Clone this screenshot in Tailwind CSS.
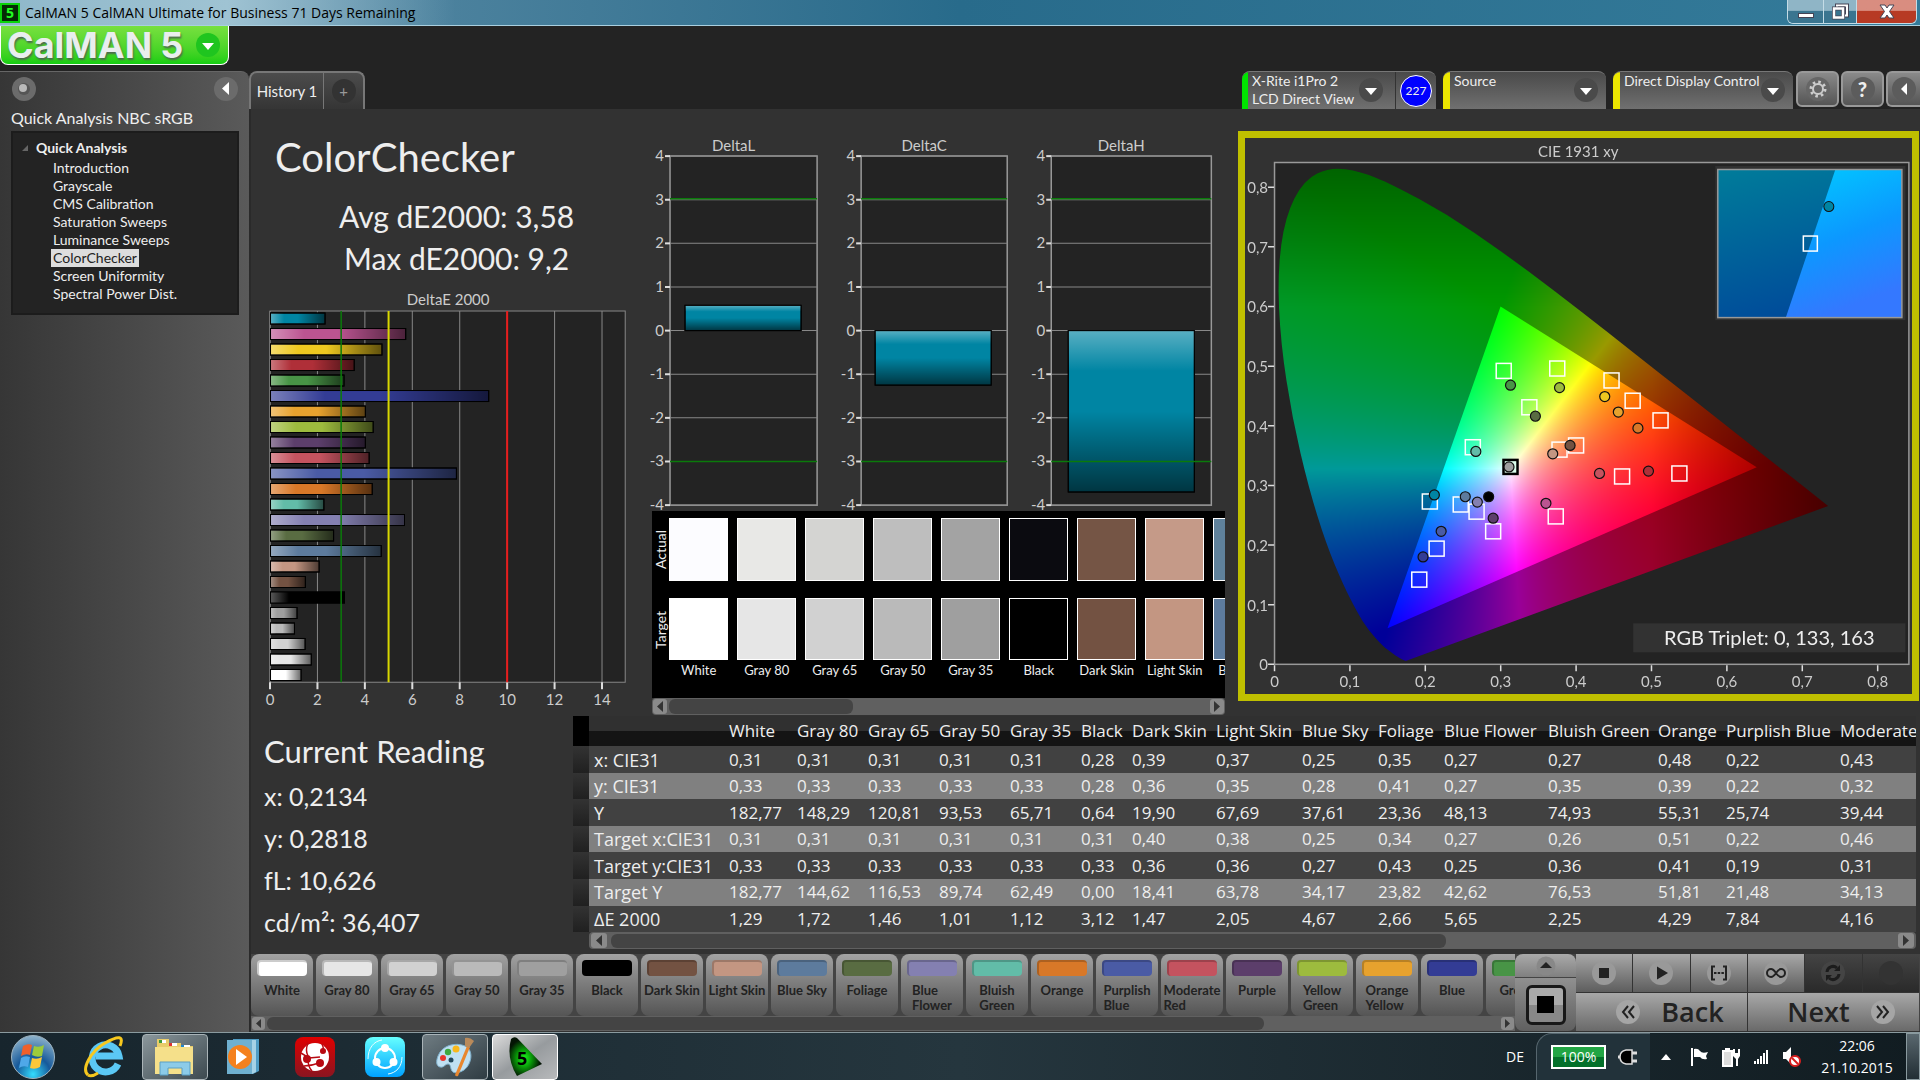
<!DOCTYPE html>
<html lang="en">
<head>
  <meta charset="UTF-8">
  <title>CalMAN 5</title>
  <script src="https://cdn.jsdelivr.net/npm/@tailwindcss/browser@4"></script>
</head>
<body class="h-screen overflow-hidden flex flex-col bg-[#232323] text-[#eee] font-['Lato','Noto_Sans',sans-serif] text-[15px]">

  <!-- window title -->
  <div class="h-[26px] shrink-0 flex items-start justify-between border-b border-[#a9cfdf] bg-linear-to-r from-[#6795ad] via-[#286b8b] to-[#347b9a] text-black">
    <div class="flex items-center h-full gap-[5px] pr-10 bg-linear-to-r from-[#8fb8ca] via-[#9fc3d3] to-transparent font-['Open_Sans',sans-serif] text-sm">
      <span class="w-5 h-5 bg-[#052c05] border-2 border-[#0bd40b] text-[#2f2] font-bold leading-4 text-center">5</span>
      <span>CalMAN 5 CalMAN Ultimate for Business 71 Days Remaining</span>
    </div>
    <div class="flex h-6 mr-[3px] border border-t-0 border-[#c4dce6] rounded-b-md overflow-hidden">
      <button aria-label="Minimize" class="w-9 flex justify-center items-end pb-[5px] bg-linear-to-b from-[#8fb5c6] from-45% to-[#3a7590] to-50% border-r border-[#c4dce6]"><span class="w-4 h-[5px] bg-white border border-[#445]"></span></button>
      <button aria-label="Restore" class="w-[33px] flex justify-center items-center bg-linear-to-b from-[#8fb5c6] from-45% to-[#3a7590] to-50% border-r border-[#c4dce6]">
        <svg width="18" height="17" viewBox="0 0 18 17" fill="none"><path d="M6 2.5h10v10H6z" stroke="#445" stroke-width="4"/><path d="M6 2.5h10v10H6z" stroke="#fff" stroke-width="2"/><path d="M3 5.500h9v9H3z" fill="#3a7590" stroke="#445" stroke-width="4"/><path d="M3 5.500h9v9H3z" stroke="#fff" stroke-width="2.500"/></svg>
      </button>
      <button aria-label="Close" class="w-[59px] flex justify-center items-center bg-linear-to-b from-[#d98d80] from-45% to-[#b73a24] to-50%">
        <svg width="16" height="15" viewBox="0 0 16 15"><path d="M1 1h5l2 3 2-3h5l-4.500 6.500L15 14h-5l-2-3-2 3H1l4.500-6.500z" fill="#fff" stroke="#445"/></svg>
      </button>
    </div>
  </div>

  <header class="h-[45px] shrink-0">
    <button class="h-[39px] w-[229px] flex items-center gap-2 pl-[6px] rounded-b-lg border border-t-0 border-white bg-linear-to-b from-[#77e03f] to-[#12ce12]">
      <span class="w-[180px] shrink-0 whitespace-nowrap text-left font-['Inter',sans-serif] font-bold text-[36px] leading-8 text-[#e9eeee] [text-shadow:1px_2px_2px_#4c6b4c]">CalMAN<span class="ml-2">5</span></span>
      <svg class="shrink-0" width="26" height="26" viewBox="0 0 26 26"><circle cx="13" cy="13" r="12" fill="#1fc51f"/><path d="M7 11h12l-6 7z" fill="#fff"/></svg>
    </button>
  </header>

  <div class="flex-1 min-h-0 flex">
    <!-- workflow tree -->
    <aside class="w-[249px] shrink-0 pt-1 pl-[11px] pr-[10px] rounded-tr-lg border-t border-[#666] bg-linear-to-r from-[#363636] to-[#5a5a5a]">
      <div class="flex justify-between">
        <button aria-label="Record"><svg width="26" height="26" viewBox="0 0 26 26"><circle cx="13" cy="13" r="12" fill="#6b6b6b"/><circle cx="13" cy="13" r="6" fill="#555"/><circle cx="12" cy="12" r="4" fill="#b9b9b9"/></svg></button>
        <button aria-label="Collapse"><svg width="26" height="26" viewBox="0 0 26 26"><circle cx="13" cy="13" r="12" fill="#6b6b6b"/><path d="M16 6v13l-7-6.500z" fill="#fff"/></svg></button>
      </div>
      <h2 class="mt-1 leading-6 text-base whitespace-nowrap">Quick Analysis NBC sRGB</h2>
      <nav class="mt-px h-[184px] pt-[6px] border-2 border-[#1c1c1c] bg-[#232323] text-sm leading-[18px] whitespace-nowrap">
        <div class="flex items-center gap-[7px] pl-[9px] mb-[2px] font-bold"><svg width="7" height="7" viewBox="0 0 7 7"><path d="M6 0v6H0z" fill="#666"/></svg>Quick Analysis</div>
        <ul id="tree" class="pl-[38px]"></ul>
      </nav>
    </aside>

    <div class="flex-1 min-w-0 flex flex-col">
      <!-- tabs -->
      <div class="h-[38px] shrink-0 flex justify-between">
        <div class="flex w-[116px] border-2 border-b-0 border-[#777] rounded-t-lg bg-linear-to-b from-[#4c4c4c] to-[#353535]">
          <button class="w-[73px] border-r border-[#777] text-[15px] whitespace-nowrap">History 1</button>
          <button aria-label="Add" class="flex-1 flex justify-center items-center"><span class="w-6 h-6 rounded-full bg-[#333] text-[#999] leading-6">+</span></button>
        </div>
        <div class="flex gap-[7px] text-sm leading-[18px] whitespace-nowrap">
          <div class="w-[194px] flex rounded-t-lg overflow-hidden border-t border-[#777] bg-linear-to-b from-[#4a4a4a] to-[#707070]">
            <div class="w-[6px] bg-[#00e400]"></div>
            <button class="flex-1 flex justify-between pl-1 pr-[11px] text-left border-r border-[#333]"><span>X-Rite i1Pro 2<br>LCD Direct View</span><svg class="mt-[5px] -ml-2" width="26" height="26" viewBox="0 0 26 26"><circle cx="13" cy="13" r="12" fill="#4a4a4a"/><path d="M7 11h12l-6 7z" fill="#fff"/></svg></button>
            <div class="w-10 flex items-center justify-center"><span class="w-8 h-8 rounded-full bg-[#00f] border border-white text-center text-xs leading-[30px]">227</span></div>
          </div>
          <button class="w-[163px] flex text-left rounded-t-lg overflow-hidden border-t border-[#777] bg-linear-to-b from-[#4a4a4a] to-[#707070]">
            <span class="w-[7px] h-full bg-[#ebe600]"></span><span class="flex-1 pl-1">Source</span><svg class="mt-[5px] mr-[7px]" width="26" height="26" viewBox="0 0 26 26"><circle cx="13" cy="13" r="12" fill="#4a4a4a"/><path d="M7 11h12l-6 7z" fill="#fff"/></svg>
          </button>
          <button class="w-[180px] flex text-left rounded-t-lg overflow-hidden border-t border-[#777] bg-linear-to-b from-[#4a4a4a] to-[#707070]">
            <span class="w-[7px] h-full bg-[#ebe600]"></span><span class="flex-1 pl-1">Direct Display Control</span><svg class="mt-[5px] mr-[7px]" width="26" height="26" viewBox="0 0 26 26"><circle cx="13" cy="13" r="12" fill="#4a4a4a"/><path d="M7 11h12l-6 7z" fill="#fff"/></svg>
          </button>
          <div class="flex gap-[2px] -ml-1 h-9">
            <button aria-label="Settings" class="w-[43px] flex justify-center items-center rounded-md border-2 border-[#999] bg-linear-to-b from-[#8a8a8a] to-[#555]"><svg width="26" height="26" viewBox="0 0 26 26" fill="none"><circle cx="13" cy="13" r="12" fill="#666"/><circle cx="13" cy="13" r="5" stroke="#ccc" stroke-width="2"/><circle cx="13" cy="13" r="7" stroke="#ccc" stroke-width="3" stroke-dasharray="2.500 3"/></svg></button>
            <button aria-label="Help" class="w-[43px] flex justify-center items-center rounded-md border-2 border-[#999] bg-linear-to-b from-[#8a8a8a] to-[#555]"><span class="w-6 h-6 rounded-full bg-[#5c5c5c] text-xl leading-6 font-black">?</span></button>
            <button aria-label="Hide" class="w-[34px] flex justify-center items-center rounded-l-md border-2 border-r-0 border-[#999] bg-linear-to-b from-[#8a8a8a] to-[#555]"><svg width="26" height="26" viewBox="0 0 26 26"><circle cx="13" cy="13" r="12" fill="#5c5c5c"/><path d="M16 7v12l-6-6z" fill="#fff"/></svg></button>
          </div>
        </div>
      </div>

      <main class="flex-1 min-h-0 flex flex-col border-l-2 border-[#2a2a2a] bg-[#323232]">
        <div class="grid grid-cols-[393fr_580fr_695fr]">
          <!-- dE2000 summary -->
          <section class="min-w-0">
            <h1 class="pt-[22px] pl-[24px] text-[40px] leading-[52px]">ColorChecker</h1>
            <p class="mt-3 pl-[18px] text-center text-[30px] leading-[42px]">Avg dE2000: 3,58<br>Max dE2000: 9,2</p>
            <svg id="deltaE" class="mt-[10px] w-full h-auto" viewBox="252 289 393 421" font-size="15" fill="#ccc"></svg>
          </section>

          <!-- delta L / C / H and patches -->
          <section class="min-w-0 pt-[22px]">
            <svg id="deltaLCH" class="w-full h-auto overflow-visible" viewBox="645 131 580 380" font-size="15" fill="#ccc"></svg>
            <div class="ml-2">
              <div class="flex h-[187px] pt-[7px] bg-black overflow-hidden">
                <div class="w-[17px] shrink-0 flex flex-col gap-[17px] text-sm leading-[17px]">
                  <span class="h-[63px] text-center [writing-mode:vertical-rl] rotate-180">Actual</span>
                  <span class="h-[63px] text-center [writing-mode:vertical-rl] rotate-180">Target</span>
                </div>
                <div id="patches" class="flex gap-[9px] text-[13px] leading-5"></div>
              </div>
              <div class="h-[17px] flex items-center justify-between bg-[#606060] rounded-sm px-px">
                <svg width="14" height="15" viewBox="0 0 14 15"><rect width="14" height="15" rx="3" fill="#8a8a8a"/><path d="M10 2v11L4 7.500z" fill="#333"/></svg>
                <span class="ml-[2px] mr-auto w-[184px] h-[15px] rounded-md bg-[#444]"></span>
                <svg width="14" height="15" viewBox="0 0 14 15"><rect width="14" height="15" rx="3" fill="#8a8a8a"/><path d="M4 2v11l6-5.500z" fill="#333"/></svg>
              </div>
            </div>
          </section>

          <!-- chromaticity diagram -->
          <section class="min-w-0 pt-[22px] pl-[13px] pr-px">
            <div class="relative border-[7px] border-[#bfbf00]">
              <svg class="block w-full h-auto" viewBox="1245 138 667 556"><rect x="1274" y="162" width="635" height="502" fill="#232323"/></svg>
              <canvas id="gamut" width="667" height="556" class="absolute inset-0 w-full h-full"></canvas>
              <svg id="cie" class="absolute inset-0 w-full h-full" viewBox="1245 138 667 556" font-size="15" fill="#ccc"></svg>
            </div>
          </section>
        </div>

        <div class="flex mt-px">
          <section class="w-[322px] shrink-0 pl-[13px] pt-[14px] text-[25px] leading-[42px] whitespace-nowrap">
            <h2 class="text-[31px] leading-[42px] mb-[3px]">Current Reading</h2>
            <p>x: 0,2134</p>
            <p>y: 0,2818</p>
            <p>fL: 10,626</p>
            <p>cd/m²: 36,407</p>
          </section>
          <section class="flex-1 min-w-0 mr-1">
            <div class="overflow-hidden">
              <table class="table-fixed w-[1384px] h-[216px] font-['Open_Sans',sans-serif] text-[17px] leading-6 whitespace-nowrap text-left">
                <colgroup>
                  <col class="w-[16px]"><col class="w-[135px]"><col class="w-[68px]"><col class="w-[71px]"><col class="w-[71px]"><col class="w-[71px]"><col class="w-[71px]"><col class="w-[51px]"><col class="w-[84px]"><col class="w-[86px]"><col class="w-[76px]"><col class="w-[66px]"><col class="w-[104px]"><col class="w-[110px]"><col class="w-[68px]"><col class="w-[114px]"><col class="w-[122px]">
                </colgroup>
                <thead><tr id="readingsHead" class="h-[30px] bg-linear-to-b from-[#303030] from-50% to-[#141414] to-50%"></tr></thead>
                <tbody id="readings"></tbody>
              </table>
            </div>
            <div class="ml-4 h-[17px] flex items-center bg-[#606060] rounded-sm px-[2px]">
              <svg width="16" height="15" viewBox="0 0 16 15"><rect width="16" height="15" rx="3" fill="#8a8a8a"/><path d="M11 2v11L5 7.500z" fill="#333"/></svg>
              <span class="ml-1 mr-auto w-[835px] h-[14px] rounded-md bg-[#444]"></span>
              <svg width="16" height="15" viewBox="0 0 16 15"><rect width="16" height="15" rx="3" fill="#8a8a8a"/><path d="M5 2v11l6-5.500z" fill="#333"/></svg>
            </div>
          </section>
        </div>

        <!-- pattern buttons and transport -->
        <div class="mt-auto mb-px h-[77px] shrink-0 flex bg-[#444]">
          <div class="flex-1 min-w-0 flex flex-col">
            <div id="patterns" class="flex gap-[3px] h-[62px] overflow-hidden text-[13px] leading-[15px] font-bold text-[#222]"></div>
            <div class="h-[15px] flex items-center bg-[#606060] px-px">
              <svg width="13" height="13" viewBox="0 0 13 13"><rect width="13" height="13" rx="3" fill="#8a8a8a"/><path d="M9 2v9L4 6.500z" fill="#333"/></svg>
              <span class="ml-[2px] mr-auto w-[997px] h-[13px] rounded-md bg-[#444]"></span>
              <svg width="13" height="13" viewBox="0 0 13 13"><rect width="13" height="13" rx="3" fill="#8a8a8a"/><path d="M4 2v9l5-4.500z" fill="#333"/></svg>
            </div>
          </div>
          <div class="w-[61px] flex flex-col gap-px bg-[#444]">
            <button aria-label="Up" class="h-[23px] flex justify-center items-center rounded-t-lg bg-linear-to-b from-[#aaa] to-[#808080]"><svg width="20" height="20" viewBox="0 0 20 20"><circle cx="10" cy="10" r="9.500" fill="#888"/><path d="M4 12h12l-6-6z" fill="#222"/></svg></button>
            <button aria-label="Window pattern" class="flex-1 flex justify-center items-center rounded-b-lg bg-linear-to-b from-[#909090] to-[#606060]"><span class="w-10 h-10 rounded-md border-3 border-[#181818] flex justify-center items-center bg-linear-to-b from-[#aaa] from-50% to-[#888] to-50%"><span class="w-[17px] h-[17px] bg-black"></span></span></button>
          </div>
          <div class="w-[343px] mr-px grid grid-cols-6 grid-rows-2 gap-px bg-[#333] text-[#222]">
            <button aria-label="Stop" class="flex justify-center items-center bg-linear-to-b from-[#a8a8a8] to-[#5e5e5e]"><svg width="26" height="26" viewBox="0 0 26 26"><circle cx="13" cy="13" r="12" fill="#999"/><path d="M8 8h10v10H8z" fill="#222"/></svg></button>
            <button aria-label="Play" class="flex justify-center items-center bg-linear-to-b from-[#a8a8a8] to-[#5e5e5e]"><svg width="26" height="26" viewBox="0 0 26 26"><circle cx="13" cy="13" r="12" fill="#999"/><path d="M9 6.500v13l11-6.500z" fill="#222"/></svg></button>
            <button aria-label="Series" class="flex justify-center items-center bg-linear-to-b from-[#a8a8a8] to-[#5e5e5e]"><svg width="26" height="26" viewBox="0 0 26 26" fill="none" stroke="#222" stroke-width="2"><circle cx="13" cy="13" r="12" fill="#999" stroke="none"/><path d="M9 6.500H6v13h3M17 6.500h3v13h-3"/><path d="M8 13h10" stroke-dasharray="2.500 1.200"/></svg></button>
            <button aria-label="Continuous" class="flex justify-center items-center bg-linear-to-b from-[#a8a8a8] to-[#5e5e5e]"><svg width="26" height="26" viewBox="0 0 26 26" fill="none" stroke="#222" stroke-width="2"><circle cx="13" cy="13" r="12" fill="#999" stroke="none"/><path d="M13 13c-2-3-3.500-4-5-4a4 4 0 0 0 0 8c1.500 0 3-1 5-4s3.500-4 5-4a4 4 0 0 1 0 8c-1.500 0-3-1-5-4z"/></svg></button>
            <button aria-label="Refresh" class="flex justify-center items-center bg-linear-to-b from-[#444] to-[#2a2a2a]"><svg width="26" height="26" viewBox="0 0 26 26" fill="none" stroke="#1c1c1c" stroke-width="3"><circle cx="13" cy="13" r="12" fill="#444" stroke="none"/><path d="M7 12a6 6 0 0 1 10-4M19 14a6 6 0 0 1-10 4"/><path d="M20 5v6h-6zM6 21v-6h6z" fill="#1c1c1c" stroke="none"/></svg></button>
            <button aria-label="None" class="flex justify-center items-center bg-linear-to-b from-[#444] to-[#2a2a2a]"><svg width="26" height="26" viewBox="0 0 26 26"><circle cx="13" cy="13" r="12" fill="#333"/></svg></button>
            <button class="col-span-3 flex justify-center items-center gap-5 pl-4 bg-linear-to-b from-[#a8a8a8] to-[#6a6a6a] font-['Open_Sans',sans-serif] font-semibold text-[27px] leading-8"><svg width="26" height="26" viewBox="0 0 26 26" fill="none" stroke="#222" stroke-width="2"><circle cx="13" cy="13" r="12" fill="#a5a5a5" stroke="none"/><path d="M13 7l-5 6 5 6M19 7l-5 6 5 6"/></svg>Back</button>
            <button class="col-span-3 flex justify-center items-center gap-5 pl-4 bg-linear-to-b from-[#a8a8a8] to-[#6a6a6a] font-['Open_Sans',sans-serif] font-semibold text-[27px] leading-8">Next<svg width="26" height="26" viewBox="0 0 26 26" fill="none" stroke="#222" stroke-width="2"><circle cx="13" cy="13" r="12" fill="#a5a5a5" stroke="none"/><path d="M7 7l5 6-5 6M13 7l5 6-5 6"/></svg></button>
          </div>
        </div>
      </main>
    </div>
  </div>

  <!-- taskbar -->
  <footer class="h-12 shrink-0 flex items-center justify-between border-t border-[#8a9a9f] bg-linear-to-r from-[#17252d] via-[#25363e] to-[#111c21] font-['Open_Sans',sans-serif] text-white">
    <div class="flex items-center h-full">
      <button aria-label="Start" class="w-[66px] flex justify-center">
        <svg width="46" height="46" viewBox="0 0 46 46"><defs><radialGradient id="orb" cx=".5" cy=".9" r=".9"><stop offset="0" stop-color="#3df"/><stop offset=".45" stop-color="#16599a"/><stop offset="1" stop-color="#8fb4cc"/></radialGradient></defs><circle cx="23" cy="23" r="21.500" fill="url(#orb)" stroke="#9fb4c0"/><path d="M13 12q5-3 9-1l-2 10q-4-2-9 1z" fill="#f0602a"/><path d="M24 12q5 2 10-1l-2 11q-5 2-10-1z" fill="#9ccb3b"/><path d="M11 24q4-3 9-1l-2 10q-5-2-9 1z" fill="#4fa8e8"/><path d="M22 24q5 2 10-1l-2 10q-5 3-10 1z" fill="#fbc73a"/></svg>
      </button>
      <button aria-label="Internet Explorer" class="w-[76px] flex justify-center">
        <svg width="42" height="44" viewBox="0 0 42 44" fill="none"><path d="M35 29a13.500 13.500 0 1 1 1-8H13" stroke="#5bc8f5" stroke-width="7"/><path d="M5 40C-2 34 8 16 22 8s19-7 15 3" stroke="#f7c81e" stroke-width="3"/><path d="M5 40c3 2 7 0 10-2" stroke="#f7c81e" stroke-width="3"/></svg>
      </button>
      <button aria-label="Explorer" class="w-[66px] h-[46px] flex justify-center items-center border border-[#aab4b8] rounded-sm bg-linear-to-br from-[#8b979c] to-[#3d4a50]">
        <svg width="42" height="40" viewBox="0 0 42 40"><path d="M3 2h12v4h12v3h12v28H3z" fill="#e8cc6a"/><path d="M5 3h7v3H5zM15 6h8v3h-8zM27 8h9v3h-9z" fill="#fff"/><path d="M5 3h3v3H5z" fill="#3a9a3a"/><path d="M15 6h3v3h-3z" fill="#d33"/><path d="M27 8h3v3h-3z" fill="#28c"/><path d="M1 10h38v27H1z" fill="#f5e08a"/><path d="M6 25h30v13h-8v-7H14v7H6z" fill="#8ccbe8" stroke="#5a9fc4"/></svg>
      </button>
      <button aria-label="Media Player" class="w-[70px] flex justify-center">
        <svg width="36" height="38" viewBox="0 0 36 38"><path d="M8 1h26v32l-6 3H8z" fill="#4f9cc4"/><path d="M5 2h26v32l-4 2H5z" fill="#a6d2e6"/><path d="M2 2h25v34H2z" fill="#6fb0d0"/><circle cx="15" cy="19" r="12" fill="#f4811e"/><path d="M11 11v16l11-8z" fill="#fff"/></svg>
      </button>
      <button aria-label="Globe" class="w-[74px] flex justify-center">
        <svg width="40" height="40" viewBox="0 0 40 40"><defs><linearGradient id="rd" x2="0" y2="1"><stop stop-color="#e00000"/><stop offset="1" stop-color="#8a1520"/></linearGradient></defs><rect width="40" height="40" rx="8" fill="url(#rd)"/><ellipse cx="20" cy="20" rx="14" ry="14" fill="#fff"/><path d="M13 6q-3 7 0 13M27 7q3 6-1 9M6 16l8 5 11-1M9 29q7 0 15-3M13 22q0 8 4 12" fill="none" stroke="#b80a12" stroke-width="1.500"/><circle cx="12" cy="22" r="4" fill="#b80a12"/><circle cx="28" cy="14" r="3" fill="#b80a12"/><circle cx="25" cy="26" r="4" fill="#b80a12"/></svg>
      </button>
      <button aria-label="Share" class="w-[66px] flex justify-center">
        <svg width="40" height="40" viewBox="0 0 40 40" fill="none"><defs><linearGradient id="cy" x2="0" y2="1"><stop stop-color="#6ff"/><stop offset="1" stop-color="#00a2ff"/></linearGradient></defs><rect width="40" height="40" rx="8" fill="url(#cy)"/><circle cx="20" cy="21" r="10" stroke="#fff" stroke-width="2"/><g fill="#fff"><circle cx="20" cy="11" r="4"/><circle cx="11.500" cy="25" r="4"/><circle cx="28.500" cy="25" r="4"/></g><path d="M3 22C3 11 9 4 17 3M37 20c0 10-6 16-14 17" stroke="#e8ffff"/></svg>
      </button>
      <button aria-label="Paint" class="ml-1 w-[66px] h-[46px] flex justify-center items-center border border-[#aab4b8] rounded-sm bg-linear-to-br from-[#6f7c82] to-[#2f3c43]">
        <svg width="42" height="42" viewBox="0 0 42 42"><path d="M4 20C8 9 22 6 31 10s7 18-1 24c-5 3-10 4-12 1s-1-7-4-7-4 4-8 3-4-6-2-11z" fill="#bfe0f2" stroke="#7eb0cc"/><circle cx="9" cy="22" r="3" fill="#e8352e"/><circle cx="14" cy="16" r="3.200" fill="#3fa83f"/><circle cx="22" cy="13" r="3.500" fill="#f8b81c"/><circle cx="17" cy="24" r="2.500" fill="#23485c"/><path d="M33 10l3 1-12 29q-2 1-3-1z" fill="#e8862e"/><path d="M31 2q5-1 9 3l-5 7-4-2z" fill="#b98a5a"/></svg>
      </button>
      <button aria-label="CalMAN" class="ml-1 w-[66px] h-[46px] flex justify-center items-center border border-white rounded-sm bg-linear-to-br from-[#dcdcdc] via-[#979b9e] to-[#b8babc]">
        <svg width="40" height="42" viewBox="0 0 40 42"><defs><radialGradient id="gl" cx=".45" cy=".55" r=".5"><stop stop-color="#1cff1c"/><stop offset=".5" stop-color="#089008"/><stop offset="1" stop-color="#041504"/></radialGradient></defs><path d="M6 3q3-3 6-1l25 26-25 12Q1 22 6 3z" fill="url(#gl)"/><text x="12" y="29" font-size="18" font-weight="700" fill="#000">5</text></svg>
      </button>
    </div>
    <div class="flex items-center h-full">
      <span class="mr-3 text-sm">DE</span>
      <div class="w-[114px] h-full flex items-center gap-[11px] pl-[14px] rounded-tl-2xl border-l border-t border-[#56666e] bg-[#22323a]">
        <span class="w-[55px] h-6 border-2 border-white bg-linear-to-b from-[#22a544] from-50% to-[#04702a] to-50% text-center text-sm leading-5">100%</span>
        <svg width="22" height="18" viewBox="0 0 22 18"><path d="M1 9h4" stroke="#ddd" stroke-width="3"/><path d="M14 5h6M14 13h6" stroke="#ddd" stroke-width="3"/><path d="M9 2h6v14H9Q3 15 3 9t6-7z" fill="#000" stroke="#ddd" stroke-width="1.500"/></svg>
      </div>
      <svg class="ml-[10px]" width="12" height="8" viewBox="0 0 12 8"><path d="M1 7h10L6 1z" fill="#fff"/></svg>
      <svg class="ml-[18px]" width="20" height="20" viewBox="0 0 20 20"><path d="M2 1v18" stroke="#fff" stroke-width="2"/><path d="M4 2q4-1 6 2t8 1l-2 4 1 3q-5 1-7-2H4z" fill="#fff"/></svg>
      <svg class="ml-[11px]" width="20" height="20" viewBox="0 0 20 20" fill="none" stroke="#fff" stroke-width="2"><path d="M2 4h9v15H2z" fill="#ddd"/><path d="M4 2h5M16 19v-8M13 2v4M18 2v4"/><path d="M12 6h7v3l-2 3h-2l-3-3z" fill="#fff" stroke="none"/></svg>
      <svg class="ml-3" width="17" height="16" viewBox="0 0 17 16" fill="#fff"><path d="M1 12h2v3H1zM4 10h2v5H4zM7 7h2v8H7zM10 4h2v11h-2zM13 1h2v14h-2z"/></svg>
      <svg class="ml-3" width="20" height="22" viewBox="0 0 20 22"><path d="M1 6h3l5-5v17l-5-5H1z" fill="#fff"/><circle cx="13" cy="15" r="5" fill="#fff" stroke="#d81e1e" stroke-width="2"/><path d="M10 12l6 6" stroke="#d81e1e" stroke-width="2"/></svg>
      <div class="ml-[6px] w-[98px] text-center text-sm leading-[22px]">22:06<br>21.10.2015</div>
      <button aria-label="Show desktop" class="w-[14px] h-full border border-[#8a9a9f] bg-linear-to-b from-[#5a686f] to-[#222e34]"></button>
    </div>
  </footer>

  <script>
    const byId = (id) => document.getElementById(id);

    byId('tree').innerHTML = ['Introduction', 'Grayscale', 'CMS Calibration', 'Saturation Sweeps', 'Luminance Sweeps', 'ColorChecker', 'Screen Uniformity', 'Spectral Power Dist.']
      .map(t => `<li><a href="#" class="px-[2px] inline-block ${t === 'ColorChecker' ? 'bg-[#ddd] text-[#222]' : ''}">${t}</a></li>`).join('');

    const patches = [
      ['White', '#ffffff', '#fcfcff'], ['Gray 80', '#e6e6e6', '#e8e8e6'], ['Gray 65', '#d1d1d1', '#d4d4d2'], ['Gray 50', '#bababa', '#bebebe'],
      ['Gray 35', '#9f9f9f', '#a3a3a3'], ['Black', '#000000', '#0b0b10'], ['Dark Skin', '#735242', '#755545'], ['Light Skin', '#c39682', '#c59a88'],
      ['Blue Sky', '#5d7b9d', '#5f819b'], ['Foliage', '#596c42'], ['Blue Flower', '#8480b1'], ['Bluish Green', '#62bca8'], ['Orange', '#d87828'],
      ['Purplish Blue', '#4a5ba5'], ['Moderate Red', '#c4535f'], ['Purple', '#5c3e6b'], ['Yellow Green', '#9dbb3e'], ['Orange Yellow', '#e7a22e'],
      ['Blue', '#333c95'], ['Green', '#489446'], ['Red', '#af2f38'], ['Yellow', '#eec820'], ['Magenta', '#bb5491'], ['Cyan', '#0085a3'],
    ];

    byId('patches').innerHTML = patches.slice(0, 9).map(([name, target, actual]) => `
      <div class="w-[59px] shrink-0 text-center whitespace-nowrap">
        <div class="h-[63px] border border-white" style="background:${actual}"></div>
        <div class="h-[62px] mt-[17px] border border-white" style="background:${target}"></div>
        ${name}
      </div>`).join('');

    byId('patterns').innerHTML = patches.slice(0, 20).map(([name, color]) => `
      <button class="w-[62px] h-[62px] shrink-0 flex flex-col items-center pt-[6px] rounded-lg bg-linear-to-b from-[#a2a2a2] to-[#555]">
        <span class="w-[50px] h-4 mb-[7px] rounded-sm shrink-0 border-t-2 border-l-2 border-black/20" style="background-color:${color}"></span>
        <span class="text-left">${/Gray|Skin|Sky/.test(name) ? name.replace(' ', '&nbsp;') : name.replace(' ', '<br>')}</span>
      </button>`).join('');

    // readings table
    const rows = [
      ['x: CIE31', '0,31 0,31 0,31 0,31 0,31 0,28 0,39 0,37 0,25 0,35 0,27 0,27 0,48 0,22 0,43'],
      ['y: CIE31', '0,33 0,33 0,33 0,33 0,33 0,28 0,36 0,35 0,28 0,41 0,27 0,35 0,39 0,22 0,32'],
      ['Y', '182,77 148,29 120,81 93,53 65,71 0,64 19,90 67,69 37,61 23,36 48,13 74,93 55,31 25,74 39,44'],
      ['Target x:CIE31', '0,31 0,31 0,31 0,31 0,31 0,31 0,40 0,38 0,25 0,34 0,27 0,26 0,51 0,22 0,46'],
      ['Target y:CIE31', '0,33 0,33 0,33 0,33 0,33 0,33 0,36 0,36 0,27 0,43 0,25 0,36 0,41 0,19 0,31'],
      ['Target Y', '182,77 144,62 116,53 89,74 62,49 0,00 18,41 63,78 34,17 23,82 42,62 76,53 51,81 21,48 34,13'],
      ['ΔE 2000', '1,29 1,72 1,46 1,01 1,12 3,12 1,47 2,05 4,67 2,66 5,65 2,25 4,29 7,84 4,16'],
    ];
    byId('readingsHead').innerHTML = '<td class="bg-black"></td><td></td>' +
      patches.slice(0, 15).map(p => `<th class="p-0 pl-[5px] font-normal">${p[0].split(' ')[0] === 'Moderate' ? 'Moderate' : p[0]}</th>`).join('');
    byId('readings').innerHTML = rows.map(([label, values], i) => `
      <tr class="${i % 2 ? 'bg-[#808080]' : 'bg-[#414141]'}">
        <td class="bg-linear-to-b from-[#333] to-[#202020]"></td>
        <th class="p-0 pl-[5px] font-normal text-lg leading-6">${label}</th>
        ${values.split(' ').map(v => `<td class="p-0 pl-[5px]">${v}</td>`).join('')}
      </tr>`).join('');

    // DeltaE 2000 bars
    const dE = [1.29, 1.72, 1.46, 1.01, 1.12, 3.12, 1.47, 2.05, 4.67, 2.66, 5.65, 2.25, 4.29, 7.84, 4.16, 4.0, 4.33, 4.0, 9.2, 3.1, 3.53, 4.7, 5.7, 2.3];
    const ex = v => 271 + v * 23.7;
    let s = '<defs>' + [['shadeX', ''], ['shadeY', ' x2="0" y2="1"']].map(([id, dir]) => `
      <linearGradient id="${id}"${dir}><stop stop-color="#fff" stop-opacity=".35"/><stop offset=".25" stop-color="#fff" stop-opacity="0"/>
      <stop offset=".5" stop-color="#000" stop-opacity="0"/><stop offset="1" stop-color="#000" stop-opacity=".6"/></linearGradient>`).join('') + '</defs>';
    s += '<text x="449" y="305" text-anchor="middle">DeltaE 2000</text><rect x="271" y="311" width="355" height="371" fill="#232323" stroke="#888"/>';
    for (let v = 0; v <= 14; v += 2) {
      s += `<path d="M${ex(v)} 311V682" stroke="#888"/><path d="M${ex(v)} 682v7" stroke="#ddd" stroke-width="2"/><text x="${ex(v)}" y="705" text-anchor="middle">${v}</text>`;
    }
    dE.forEach((v, i) => {
      const box = `x="271.500" y="${313 + (23 - i) * 15.49}" width="${v * 23.7}" height="11" stroke="#000"`;
      s += `<rect ${box} fill="${patches[i][1]}"/><rect ${box} fill="url(#shadeX)"/>`;
    });
    s += `<path d="M${ex(3)} 311V682" stroke="#0a7a0a" stroke-width="1.500"/><path d="M${ex(5)} 311V682" stroke="#d8d800" stroke-width="2"/><path d="M${ex(10)} 311V682" stroke="#e81c1c" stroke-width="2"/>`;
    byId('deltaE').innerHTML = s;

    // DeltaL, DeltaC, DeltaH: [title, left, right, bar left, bar right, value]
    const dy = v => 330.5 - v * 43.6;
    byId('deltaLCH').innerHTML = [['DeltaL', 671, 818, 686, 802, .58], ['DeltaC', 862, 1008, 876, 992, -1.25], ['DeltaH', 1052, 1212, 1069, 1195, -3.7]].map(([t, l, r, bl, br, val]) => {
      let g = `<text x="${(l + r) / 2 - 10}" y="151" text-anchor="middle">${t}</text><rect x="${l}" y="156" width="${r - l}" height="349" fill="#232323" stroke="#999" stroke-width="1.500"/>`;
      for (let v = -4; v <= 4; v++) {
        g += `<path d="M${l} ${dy(v)}H${r}" stroke="#888"/><path d="M${l - 5} ${dy(v)}h5" stroke="#ddd" stroke-width="2"/><text x="${l - 6}" y="${dy(v) + 5}" text-anchor="end">${v}</text>`;
      }
      const box = `x="${bl}" y="${dy(Math.max(val, 0))}" width="${br - bl}" height="${Math.abs(val) * 43.6}" stroke="#000"`;
      return g + `<rect ${box} fill="#0085a3"/><rect ${box} fill="url(#shadeY)"/><path d="M${l} ${dy(3) - 1}H${r}M${l} ${dy(-3)}H${r}" stroke="#0a7a0a" stroke-width="1.500"/>`;
    }).join('');

    // CIE 1931 diagram
    const cx = x => 1274.5 + x * 753.5, cy = y => 664 - y * 596;
    const locus = [[.1741,.005],[.1644,.0109],[.1566,.0177],[.144,.0297],[.1241,.0578],[.1096,.0868],[.0913,.1327],[.0687,.2007],[.0454,.295],[.0235,.4127],[.0082,.5384],[.0039,.6548],[.0139,.7502],[.0389,.812],[.0743,.8338],[.1142,.8262],[.1547,.8059],[.2296,.7543],[.3016,.6923],[.3731,.6245],[.4441,.5547],[.5125,.4866],[.5752,.4242],[.627,.3725],[.6658,.334],[.6915,.3083],[.7347,.2653]];
    const ctx = byId('gamut').getContext('2d');

    function layer(gain) {
      const c = document.createElement('canvas');
      c.width = 667; c.height = 556;
      const g = c.getContext('2d'), img = g.createImageData(667, 556);
      for (let j = 0; j < 556; j++) for (let i = 0; i < 667; i++) {
        const x = (i - 29.5) / 753.5, y = Math.max((526 - j) / 596, .001), X = x / y, Z = (1 - x - y) / y;
        const rgb = [3.2406 * X - 1.5372 - .4986 * Z, -.9689 * X + 1.8758 + .0415 * Z, .0557 * X - .204 + 1.057 * Z].map(v => Math.max(v, 0));
        const k = 255 * gain * (1 - Math.max(x - .5, 0) * 2.3) * (1 - Math.max(y - .6, 0) * 1.5) / Math.max(...rgb);
        img.data.set([rgb[0] * k, rgb[1] * k, rgb[2] * k, 255], (j * 667 + i) * 4);
      }
      g.putImageData(img, 0, 0);
      return c;
    }
    function paint(points, gain, smooth) {
      const p = points.map(([x, y]) => [cx(x) - 1245, cy(y) - 138]);
      ctx.save();
      ctx.beginPath();
      ctx.moveTo(...p[0]);
      for (let i = 1; i < p.length; i++) {
        if (smooth && i < p.length - 1) ctx.quadraticCurveTo(...p[i], (p[i][0] + p[i + 1][0]) / 2, (p[i][1] + p[i + 1][1]) / 2);
        else ctx.lineTo(...p[i]);
      }
      ctx.closePath();
      ctx.clip();
      ctx.drawImage(layer(gain), 0, 0);
      ctx.restore();
    }
    paint(locus, .6, true);
    paint([[.64, .33], [.3, .6], [.15, .06]], 1, false);

    const targets = [[.304,.492],[.375,.496],[.447,.476],[.475,.442],[.512,.409],[.338,.431],[.263,.364],[.378,.36],[.4,.367],[.461,.315],[.537,.32],[.373,.248],[.206,.273],[.247,.268],[.268,.256],[.29,.223],[.215,.194],[.192,.142]];
    const actuals = [[.313,.468,'#489446'],[.378,.464,'#9dbb3e'],[.438,.449,'#eec820'],[.456,.423,'#e7a22e'],[.482,.396,'#d87828'],[.346,.416,'#596c42'],[.267,.357,'#62bca8'],[.369,.353,'#c39682'],[.392,.367,'#735242'],[.431,.32,'#c4535f'],[.496,.324,'#af2f38'],[.36,.27,'#bb5491'],[.212,.284,'#0085a3'],[.253,.281,'#5d7b9d'],[.269,.272,'#8480b1'],[.284,.281,'#000'],[.29,.245,'#5c3e6b'],[.221,.223,'#4a5ba5'],[.197,.18,'#333c95'],[.311,.331,'#9f9f9f']];

    let c = '<text x="1578" y="157" text-anchor="middle">CIE 1931 xy</text><rect x="1274.500" y="162.500" width="634" height="501.500" fill="none" stroke="#999" stroke-width="1.500"/>';
    for (let i = 0; i <= 8; i++) {
      const label = i ? '0,' + i : '0';
      c += `<path d="M${cx(i / 10)} 665v6M1268 ${cy(i / 10)}h6" stroke="#ddd" stroke-width="1.500"/>
        <text x="${cx(i / 10)}" y="687" text-anchor="middle">${label}</text><text x="1268" y="${cy(i / 10) + 6}" text-anchor="end">${label}</text>`;
    }
    targets.forEach(([x, y]) => c += `<rect x="${cx(x) - 7.5}" y="${cy(y) - 7.5}" width="15" height="15" fill="none" stroke="#fff" stroke-width="1.500"/>`);
    c += `<rect x="${cx(.313) - 7}" y="${cy(.331) - 7}" width="14" height="14" fill="#dfe" stroke="#000" stroke-width="2.500"/>`;
    actuals.forEach(([x, y, f]) => c += `<circle cx="${cx(x)}" cy="${cy(y)}" r="5" fill="${f}" stroke="#111" stroke-width="1.200"/>`);
    c += `<defs><linearGradient id="inA" x2=".3" y2="1"><stop stop-color="#007c9a"/><stop offset="1" stop-color="#004c9a"/></linearGradient>
      <linearGradient id="inB" x2=".3" y2="1"><stop stop-color="#00ccff"/><stop offset=".55" stop-color="#0c98ff"/><stop offset="1" stop-color="#3478ff"/></linearGradient></defs>
      <rect x="1715" y="166" width="190" height="154" fill="#323232"/>
      <rect x="1717.500" y="169.500" width="184" height="148" fill="url(#inA)"/><path d="M1835 169.500h66.500v148h-116z" fill="url(#inB)"/>
      <rect x="1717.500" y="169.500" width="184" height="148" fill="none" stroke="#999" stroke-width="1.500"/>
      <rect x="1803" y="236" width="14" height="15" fill="none" stroke="#fff" stroke-width="1.500"/><circle cx="1828.500" cy="206.500" r="5" fill="#0085a3" stroke="#111"/>
      <rect x="1633" y="623" width="272" height="29" fill="#323232"/><text x="1769" y="645" text-anchor="middle" font-size="20" fill="#eee">RGB Triplet: 0, 133, 163</text>`;
    byId('cie').innerHTML = c;
  </script>
</body>
</html>
